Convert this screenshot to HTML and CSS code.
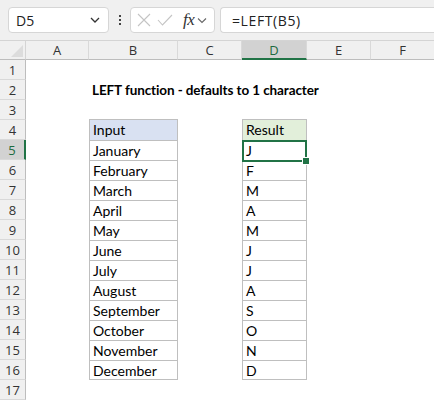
FILE: index.html
```html
<!DOCTYPE html>
<html lang="en">
<head>
    <meta charset="UTF-8">
    <title>LEFT function</title>
    <link rel="stylesheet" href="styles.css">
</head>
<body>
    <div class="toolbar">
        <div class="namebox">
            <span>D5</span>
            <svg width="12" height="8" viewBox="0 0 12 8"><path d="M2 2 L6 6 L10 2" fill="none" stroke="#333" stroke-width="1.3"/></svg>
        </div>
        <div class="dots"><i></i><i></i><i></i></div>
        <div class="fxbox">
            <svg width="14" height="14" viewBox="0 0 14 14"><path d="M1 1 L13 13 M13 1 L1 13" stroke="#c4c4c4" stroke-width="1.1"/></svg>
            <svg width="16" height="14" viewBox="0 0 16 14"><path d="M1 7 L5.5 12 L15 2" fill="none" stroke="#c4c4c4" stroke-width="1.1"/></svg>
            <span class="fx">fx</span>
            <svg width="10" height="7" viewBox="0 0 10 7"><path d="M1 1.5 L5 5.5 L9 1.5" fill="none" stroke="#666" stroke-width="1.1"/></svg>
        </div>
        <div class="formula">=LEFT(B5)</div>
    </div>

    <div class="sheet">
        <div class="corner"></div>
        <div class="colhead">A</div>
        <div class="colhead">B</div>
        <div class="colhead">C</div>
        <div class="colhead active">D</div>
        <div class="colhead">E</div>
        <div class="colhead last">F</div>

        <div class="rowhead">1</div><div></div><div></div><div></div><div></div><div></div><div></div>
        <div class="rowhead">2</div><div></div><div class="title">LEFT function - defaults to 1 character</div><div></div><div></div><div></div><div></div>
        <div class="rowhead">3</div><div></div><div></div><div></div><div></div><div></div><div></div>
        <div class="rowhead">4</div><div></div><div class="cell hd blue">Input</div><div></div><div class="cell hd green">Result</div><div></div><div></div>
        <div class="rowhead active">5</div><div></div><div class="cell">January</div><div></div><div class="cell sel">J</div><div></div><div></div>
        <div class="rowhead">6</div><div></div><div class="cell">February</div><div></div><div class="cell">F</div><div></div><div></div>
        <div class="rowhead">7</div><div></div><div class="cell">March</div><div></div><div class="cell">M</div><div></div><div></div>
        <div class="rowhead">8</div><div></div><div class="cell">April</div><div></div><div class="cell">A</div><div></div><div></div>
        <div class="rowhead">9</div><div></div><div class="cell">May</div><div></div><div class="cell">M</div><div></div><div></div>
        <div class="rowhead">10</div><div></div><div class="cell">June</div><div></div><div class="cell">J</div><div></div><div></div>
        <div class="rowhead">11</div><div></div><div class="cell">July</div><div></div><div class="cell">J</div><div></div><div></div>
        <div class="rowhead">12</div><div></div><div class="cell">August</div><div></div><div class="cell">A</div><div></div><div></div>
        <div class="rowhead">13</div><div></div><div class="cell">September</div><div></div><div class="cell">S</div><div></div><div></div>
        <div class="rowhead">14</div><div></div><div class="cell">October</div><div></div><div class="cell">O</div><div></div><div></div>
        <div class="rowhead">15</div><div></div><div class="cell">November</div><div></div><div class="cell">N</div><div></div><div></div>
        <div class="rowhead">16</div><div></div><div class="cell end">December</div><div></div><div class="cell end">D</div><div></div><div></div>
        <div class="rowhead">17</div><div></div><div></div><div></div><div></div><div></div><div></div>
    </div>
</body>
</html>
```

FILE: styles.css
```css
*{
    margin: 0;
    padding: 0;
    box-sizing: border-box;
}
body
{
    width: 434px;
    height: 400px;
    overflow: hidden;
    background: #fff;
    font-family: "Open Sans", "Noto Sans", sans-serif;
}

.toolbar
{
    height: 40px;
    background-color: #f0f0f0;
    display: flex;
    align-items: center;
    padding-left: 8px;
}
.namebox
{
    width: 101px;
    height: 26px;
    background: #fff;
    border: 1px solid #d6d6d6;
    border-radius: 4px;
    display: flex;
    align-items: center;
    justify-content: space-between;
    padding: 0 7px 0 7px;
    font-size: 14px;
    color: #222;
}
.dots
{
    width: 21px;
    display: flex;
    flex-direction: column;
    align-items: center;
    gap: 2px;
}
.dots i
{
    width: 2px;
    height: 2px;
    background: #444;
}
.fxbox
{
    width: 85px;
    height: 26px;
    background: #fff;
    border: 1px solid #d6d6d6;
    border-radius: 4px;
    display: flex;
    align-items: center;
    padding-left: 6px;
    gap: 6px;
}
.fx
{
    font-family: "Liberation Serif", serif;
    font-style: italic;
    font-size: 17px;
    color: #333;
    margin-left: 4px;
    margin-right: -3px;
    letter-spacing: -0.5px;
}
.formula
{
    flex: 1;
    height: 26px;
    margin-left: 5px;
    background: #fff;
    border: 1px solid #d6d6d6;
    border-right: none;
    border-radius: 4px 0 0 4px;
    display: flex;
    align-items: center;
    padding-left: 11px;
    font-size: 14px;
    color: #222;
    letter-spacing: 0.6px;
}

.sheet
{
    display: grid;
    grid-template-columns: 26px 63px 89px 64px 65px 64px 63px;
    grid-template-rows: repeat(18, 20px);
    font-family: "Lato", "Liberation Sans", sans-serif;
    font-size: 14px;
    color: #000;
}
.corner
{
    background: #f0f0f0;
    border-top: 1px solid #d4d4d4;
    border-right: 1px solid #d4d4d4;
    border-bottom: 1px solid #bdbdbd;
    position: relative;
}
.corner::after
{
    content: "";
    position: absolute;
    right: 2px;
    bottom: 2px;
    border-style: solid;
    border-width: 0 0 12px 12px;
    border-color: transparent transparent #dcdcdc transparent;
}
.colhead
{
    background: #f0f0f0;
    border-top: 1px solid #d4d4d4;
    border-right: 1px solid #d9d9d9;
    border-bottom: 1px solid #bdbdbd;
    font-family: "Open Sans", "Noto Sans", sans-serif;
    font-size: 13px;
    color: #333;
    display: flex;
    align-items: center;
    justify-content: center;
}
.colhead.active
{
    background: #d2d2d2;
    color: #1d6b3f;
    border-bottom: 2px solid #217346;
}
.colhead.last
{
    border-right: none;
}
.rowhead
{
    background: #f0f0f0;
    border-right: 1px solid #bdbdbd;
    border-bottom: 1px solid #d9d9d9;
    font-family: "Open Sans", "Noto Sans", sans-serif;
    font-size: 13px;
    color: #333;
    display: flex;
    align-items: center;
    justify-content: center;
}
.rowhead.active
{
    background: #d2d2d2;
    color: #1d6b3f;
    border-right: 2px solid #217346;
}

.title
{
    font-weight: bold;
    font-size: 13.5px;
    letter-spacing: -0.1px;
    white-space: nowrap;
    padding-left: 3px;
    line-height: 20px;
}
.cell
{
    border: 1px solid #bfbfbf;
    border-bottom: none;
    padding-left: 3px;
    line-height: 19px;
    white-space: nowrap;
}
.cell.end
{
    border-bottom: 1px solid #bfbfbf;
}
.cell.hd
{
    margin-top: -1px;
    height: 21px;
}
.blue
{
    background: #d9e1f2;
}
.green
{
    background: #e2efda;
}
.sel
{
    position: relative;
}
.sel::after
{
    content: "";
    position: absolute;
    left: -1px;
    top: -1px;
    right: -1px;
    bottom: -2px;
    border: 2px solid #217346;
}
.sel::before
{
    content: "";
    position: absolute;
    right: -4px;
    bottom: -5px;
    width: 6px;
    height: 6px;
    background: #217346;
    border: 1px solid #fff;
    z-index: 1;
}
```
